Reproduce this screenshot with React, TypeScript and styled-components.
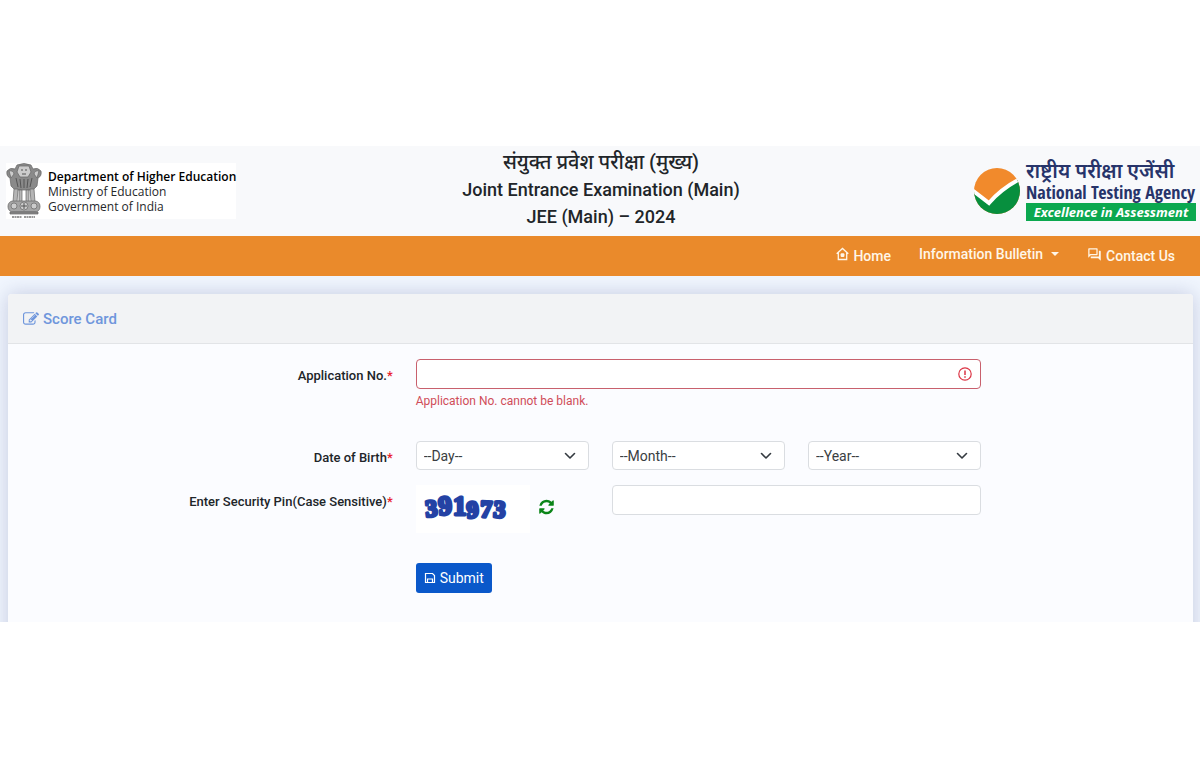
import React from "react";
import styled, { createGlobalStyle } from "styled-components";
import { MdOutlineQuestionAnswer } from "react-icons/md";

const GlobalStyle = createGlobalStyle`
  *, *::before, *::after { box-sizing: border-box; }
  body {
    margin: 0;
    background: #fff;
    color: #212529;
    font-family: Roboto, "Noto Sans", sans-serif;
    font-size: 14px;
    line-height: 20px;
  }
`;

const Page = styled.div`
  padding: 146px 0;
`;

const Header = styled.header`
  display: grid;
  grid-template-columns: 1fr auto 1fr;
  align-items: center;
  height: 90px;
  padding: 0 4px 0 6px;
  background: #f8f9fb;
`;

const Department = styled.div`
  display: flex;
  align-items: center;
  justify-self: start;
  gap: 6px;
  height: 56px;
  background: #fff;
`;

const DepartmentText = styled.p`
  margin: 0;
  color: #26282b;
  font-family: "Open Sans", sans-serif;
  font-size: 12px;
  line-height: 15px;
`;

const DepartmentName = styled.strong`
  display: block;
  color: #000;
  font-weight: 600;
`;

const Title = styled.h1`
  margin: 0;
  padding-bottom: 4px;
  font-size: 18px;
  font-weight: 500;
  line-height: 27px;
  text-align: center;
`;

const TitleLine = styled.span`
  display: block;

  &:lang(hi) { font-size: 20px; }
`;

const Agency = styled.div`
  display: flex;
  align-items: center;
  justify-self: end;
  gap: 6px;
`;

const AgencyText = styled.div`
  display: flex;
  flex-direction: column;
  width: 170px;
  color: #27346a;
`;

const AgencyHindi = styled.span`
  font-size: 20px;
  font-weight: 600;
  line-height: 20px;
  word-spacing: normal;
  white-space: nowrap;
`;

const AgencyName = styled.span`
  font-family: "Open Sans Condensed", Roboto, sans-serif;
  font-size: 18px;
  line-height: 22px;
  white-space: nowrap;
`;

const AgencyMotto = styled.span`
  background: #0ba84f;
  color: #fff;
  font-family: "Noto Sans", sans-serif;
  font-size: 13px;
  font-style: italic;
  font-weight: 700;
  line-height: 18px;
  text-align: center;
  white-space: nowrap;
`;

const Nav = styled.nav`
  display: flex;
  justify-content: flex-end;
  gap: 28px;
  height: 40px;
  padding: 8px 25px 0 0;
  background: #ea8a2b;
`;

const NavLink = styled.a<{ $raised?: boolean }>`
  display: flex;
  align-items: center;
  gap: 4px;
  height: ${(p) => (p.$raised ? 20 : 24)}px;
  color: #fff6e8;
  font-weight: 500;
  text-decoration: none;

  svg { margin-bottom: 4px; }
`;

const Caret = styled.span`
  margin-left: 4px;
  border: 4px solid transparent;
  border-top-color: currentColor;
  border-bottom: 0;
`;

const Main = styled.main`
  height: 346px;
  padding: 18px 7px 0 8px;
  overflow: hidden;
  background: #f1f6fe;
`;

const Card = styled.section`
  height: 400px;
  border-radius: 4px;
  background: #fbfcff;
  box-shadow: 0 0 20px rgba(60, 70, 130, 0.25);
`;

const CardHeader = styled.h2`
  display: flex;
  align-items: center;
  gap: 4px;
  height: 50px;
  margin: 0;
  padding: 0 15px;
  border-bottom: 1px solid #e2e4e7;
  border-radius: 4px 4px 0 0;
  background: #f2f3f5;
  color: #6f96dc;
  font-size: 15px;
  font-weight: 500;
`;

const Form = styled.form`
  display: grid;
  grid-template-columns: 385fr 566fr 189fr;
  column-gap: 23px;
  padding-top: 15px;
`;

const Row = styled.div<{ $height: number }>`
  display: grid;
  grid-column: 1 / -1;
  grid-template-columns: subgrid;
  align-items: start;
  min-height: ${(p) => p.$height}px;
`;

const Label = styled.label`
  padding-top: 7px;
  font-size: 13px;
  font-weight: 500;
  text-align: right;
`;

const Required = styled.span`
  color: #e8202e;
`;

const Fields = styled.div`
  display: grid;
  grid-template-columns: repeat(3, 1fr);
  align-items: start;
  column-gap: 23px;
`;

const InputBox = styled.div<{ $span: number }>`
  display: grid;
  grid-column: span ${(p) => p.$span};
  align-items: center;
  justify-items: end;

  > * { grid-area: 1 / 1; }
`;

const Input = styled.input<{ $invalid?: boolean }>`
  width: 100%;
  height: 30px;
  padding: 4px 8px;
  border: 1px solid ${(p) => (p.$invalid ? "#c8606d" : "#dadde1")};
  border-radius: 4px;
  background: #fff;
  font: inherit;
`;

const ErrorText = styled.p`
  grid-column: 1 / -1;
  margin: 2px 0 0;
  color: #d04d59;
  font-size: 12px;
`;

const Select = styled.select`
  width: 100%;
  height: 29px;
  padding: 0 7px;
  appearance: none;
  border: 1px solid #dadde1;
  border-radius: 4px;
  background: #fff;
  color: #3a3e42;
  font: inherit;
`;

const FieldIcon = styled.svg<{ $inset: number }>`
  margin-right: ${(p) => p.$inset}px;
  pointer-events: none;
`;

const Captcha = styled.div`
  display: flex;
  align-items: center;
  gap: 8px;
`;

const Pin = styled.div`
  display: flex;
  flex: none;
  align-items: center;
  width: 114px;
  height: 48px;
  background: #fff;
`;

const Refresh = styled.button`
  display: flex;
  padding: 0 0 5px;
  border: 0;
  background: none;
  color: #0b8518;
`;

const Submit = styled.button`
  display: flex;
  align-items: center;
  justify-content: center;
  justify-self: start;
  gap: 4px;
  height: 30px;
  padding: 0 8px;
  border: 0;
  border-radius: 3px;
  background: #0a58ca;
  color: #fff;
  font: inherit;
`;

const Emblem = () => (
  <svg width="36" height="56" viewBox="0 0 36 56" role="img" aria-label="State Emblem of India">
    <g fill="#8a8a8a" stroke="#666" strokeWidth="0.7">
      <path d="M11 2q7-3 14 0l2 4q5-2 8 2 1 5-3 7l-1 8-4 4H9l-4-4-1-8Q0 13 1 8q3-4 8-2z" />
      <path d="M8 26h4l-1 13H7zM13 27h3v12h-3zM20 27h3v12h-3zM24 26h4l1 13h-4z" fill="#b5b5b5" />
      <rect x="2" y="38" width="32" height="11" rx="5" fill="#a4a4a4" />
      <path d="M4 49h28v2H4z" />
    </g>
    <g fill="#ccc" stroke="#666" strokeWidth="0.7">
      <path d="M13 3h10l2 6-3 5h-8l-3-5zM3 8q4-1 5 3l-3 4zM33 8q-4-1-5 3l3 4z" />
      <circle cx="18" cy="43" r="4" />
      <circle cx="8" cy="43" r="3" />
      <circle cx="28" cy="43" r="3" />
    </g>
    <path d="M15 7h2M19 7h2M16 11h4M10 15l2 9M14 16l1 9M18 16v9M22 16l-1 9M26 15l-2 9M18 40v6M15 43h6" stroke="#555" fill="none" />
    <path d="M6 54h10M18 54h11" stroke="#999" strokeWidth="2" strokeDasharray="2 0.5" />
  </svg>
);

const AgencyMark = () => (
  <svg width="46" height="46" viewBox="0 0 46 46" role="img" aria-label="NTA">
    <clipPath id="disc">
      <circle cx="23" cy="23" r="23" />
    </clipPath>
    <g clipPath="url(#disc)">
      <path d="M0 0h46v46H0z" fill="#f18a2c" />
      <path d="M-1 23L15 36Q28 20 47 10V46H-1z" fill="#078f3e" />
      <path d="M-2 22L15 35Q28 20 48 10" fill="none" stroke="#fff" strokeWidth="4" />
    </g>
  </svg>
);

const HomeIcon = () => (
  <svg width="13" height="14" viewBox="0 0 13 14" fill="none" stroke="currentColor" strokeWidth="1.3" aria-hidden="true">
    <path d="M.7 6.800L6.500 1.500l5.800 5.300M2.300 5.500v7h8.400v-7" />
    <rect x="4.600" y="6.300" width="3.800" height="3.800" rx="1" fill="currentColor" stroke="none" />
  </svg>
);

const SaveIcon = () => (
  <svg width="12" height="12" viewBox="0 0 12 12" fill="none" stroke="currentColor" strokeWidth="1.200" aria-hidden="true">
    <path d="M1.500 1.500h7l2 2v7h-9zM3.500 10.500V7h5v3.500" />
  </svg>
);

const EditIcon = () => (
  <svg width="16" height="16" viewBox="0 0 1792 1792" fill="currentColor" aria-hidden="true">
    <path d="M888 1184l116-116-152-152-116 116v56h96v96h56zm440-720q-16-16-33 1l-350 350q-17 17-1 33t33-1l350-350q17-17 1-33zm80 594v190q0 119-84.5 203.5t-203.5 84.5h-832q-119 0-203.5-84.5t-84.5-203.5v-832q0-119 84.5-203.5t203.5-84.5h832q63 0 117 25 15 7 18 23 3 17-9 29l-49 49q-14 14-32 8-23-6-45-6h-832q-66 0-113 47t-47 113v832q0 66 47 113t113 47h832q66 0 113-47t47-113v-126q0-13 9-22l64-64q15-15 35-7t20 29zm-96-738l288 288-672 672h-288v-288zm444 132l-92 92-288-288 92-92q28-28 68-28t68 28l152 152q28 28 28 68t-28 68z" />
  </svg>
);

const RefreshIcon = () => (
  <svg width="17" height="18" viewBox="0 0 1792 1792" fill="currentColor" aria-hidden="true">
    <path d="M1639 1056q0 5-1 7-64 268-268 434.500t-478 166.500q-146 0-282.500-55t-243.500-157l-129 129q-19 19-45 19t-45-19-19-45v-448q0-26 19-45t45-19h448q26 0 45 19t19 45-19 45l-137 137q71 66 161 102t187 36q134 0 250-65t186-179q11-17 53-117 8-23 30-23h192q13 0 22.500 9.500t9.500 22.500zm25-800v448q0 26-19 45t-45 19h-448q-26 0-45-19t-19-45 19-45l138-138q-148-137-349-137-134 0-250 65t-186 179q-11 17-53 117-8 23-30 23h-199q-13 0-22.500-9.500t-9.500-22.500v-7q65-268 270-434.500t480-166.500q146 0 284 55.500t245 156.500l130-129q19-19 45-19t45 19 19 45z" />
  </svg>
);

const AlertIcon = () => (
  <FieldIcon $inset={9} width="14" height="14" viewBox="0 0 14 14" fill="none" stroke="#dc3545" aria-hidden="true">
    <circle cx="7" cy="7" r="6.2" strokeWidth="1.2" />
    <path d="M7 3.500v4.500M7 9.300v1.500" strokeWidth="1.500" />
  </FieldIcon>
);

const Chevron = () => (
  <FieldIcon $inset={13} width="12" height="8" viewBox="0 0 12 8" fill="none" stroke="#343a40" strokeWidth="1.600" aria-hidden="true">
    <path d="M1.500 1.500L6 6l4.500-4.500" strokeLinecap="round" strokeLinejoin="round" />
  </FieldIcon>
);

const pinDigits = [
  { char: "3", x: 10, y: 32, size: 24, turn: -5 },
  { char: "9", x: 23, y: 30, size: 27, turn: -4 },
  { char: "1", x: 37, y: 30, size: 27, turn: 0 },
  { char: "9", x: 51, y: 33, size: 24, turn: -3 },
  { char: "7", x: 64, y: 32, size: 24, turn: 2 },
  { char: "3", x: 77, y: 32, size: 24, turn: 4 },
];

const PinImage = () => (
  <svg width="114" height="48" viewBox="0 0 114 48" role="img" aria-label="Security pin">
    <g fill="#2442a4" stroke="#2442a4" strokeWidth="3" strokeLinejoin="round" fontFamily="Liberation Serif, serif" fontWeight="700">
      {pinDigits.map((d) => (
        <text key={d.x} x={d.x} y={d.y} fontSize={d.size} transform={`rotate(${d.turn} ${d.x} ${d.y})`}>
          {d.char}
        </text>
      ))}
    </g>
  </svg>
);

const dateParts = ["Day", "Month", "Year"];

export default function App() {
  return (
    <>
      <GlobalStyle />
      <Page>
        <Header>
          <Department>
            <Emblem />
            <DepartmentText>
              <DepartmentName>Department of Higher Education</DepartmentName>
              Ministry of Education
              <br />
              Government of India
            </DepartmentText>
          </Department>
          <Title>
            <TitleLine lang="hi">संयुक्त प्रवेश परीक्षा (मुख्य)</TitleLine>
            <TitleLine>Joint Entrance Examination (Main)</TitleLine>
            <TitleLine>JEE (Main) – 2024</TitleLine>
          </Title>
          <Agency>
            <AgencyMark />
            <AgencyText>
              <AgencyHindi lang="hi">राष्ट्रीय परीक्षा एजेंसी</AgencyHindi>
              <AgencyName>National Testing Agency</AgencyName>
              <AgencyMotto>Excellence in Assessment</AgencyMotto>
            </AgencyText>
          </Agency>
        </Header>
        <Nav>
          <NavLink href="#home"><HomeIcon />Home</NavLink>
          <NavLink href="#bulletin" $raised>Information Bulletin <Caret /></NavLink>
          <NavLink href="#contact"><MdOutlineQuestionAnswer size={15} />Contact Us</NavLink>
        </Nav>
        <Main>
          <Card>
            <CardHeader><EditIcon />Score Card</CardHeader>
            <Form onSubmit={(e) => e.preventDefault()}>
              <Row $height={82}>
                <Label htmlFor="application">Application No.<Required>*</Required></Label>
                <Fields>
                  <InputBox $span={3}>
                    <Input id="application" $invalid aria-invalid="true" aria-describedby="application-error" />
                    <AlertIcon />
                  </InputBox>
                  <ErrorText id="application-error">Application No. cannot be blank.</ErrorText>
                </Fields>
              </Row>
              <Row $height={44}>
                <Label htmlFor="Day">Date of Birth<Required>*</Required></Label>
                <Fields>
                  {dateParts.map((part) => (
                    <InputBox key={part} $span={1}>
                      <Select id={part} aria-label={part}>
                        <option>{`--${part}--`}</option>
                      </Select>
                      <Chevron />
                    </InputBox>
                  ))}
                </Fields>
              </Row>
              <Row $height={78}>
                <Label htmlFor="pin">Enter Security Pin(Case Sensitive)<Required>*</Required></Label>
                <Fields>
                  <Captcha>
                    <Pin><PinImage /></Pin>
                    <Refresh type="button" aria-label="Refresh security pin"><RefreshIcon /></Refresh>
                  </Captcha>
                  <InputBox $span={2}>
                    <Input id="pin" />
                  </InputBox>
                </Fields>
              </Row>
              <Row $height={30}>
                <span />
                <Submit type="submit"><SaveIcon />Submit</Submit>
              </Row>
            </Form>
          </Card>
        </Main>
      </Page>
    </>
  );
}
